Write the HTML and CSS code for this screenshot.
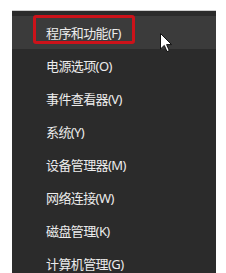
FILE: index.html
```html
<!DOCTYPE html>
<html lang="zh-CN">

<head>
    <meta charset="UTF-8">
    <meta name="viewport" content="width=device-width, initial-scale=1.0">
    <title>Win+X 菜单</title>
    <link rel="stylesheet" href="styles.css">
</head>

<body>
    <div class="menu">
        <ul class="menu-list">
            <li class="menu-item active">
                <span class="label">程序和功能(F)</span>
                <span class="mark"></span>
                <svg class="cursor" width="13" height="20" viewBox="0 0 13 20">
                    <path d="M0.5 0.5 L0.5 16 L4.3 12.4 L7 18.6 L9.3 17.6 L6.6 11.6 L11.6 11.6 Z" fill="#fff" stroke="#111" stroke-width="1" stroke-linejoin="round"/>
                </svg>
            </li>
            <li class="menu-item"><span class="label">电源选项(O)</span></li>
            <li class="menu-item"><span class="label">事件查看器(V)</span></li>
            <li class="menu-item"><span class="label">系统(Y)</span></li>
            <li class="menu-item"><span class="label">设备管理器(M)</span></li>
            <li class="menu-item"><span class="label">网络连接(W)</span></li>
            <li class="menu-item"><span class="label">磁盘管理(K)</span></li>
            <li class="menu-item"><span class="label">计算机管理(G)</span></li>
        </ul>
    </div>
</body>

</html>
```

FILE: styles.css
```css
:root {
    --menu-bg: #2b2b2b;
    --menu-hover: #3b3b3b;
    --menu-text: #ececec;
    --mark-red: #cc121a;
}

* {
    box-sizing: border-box;
    margin: 0;
    padding: 0;
}

html,
body {
    height: 100%;
    overflow: hidden;
}

body {
    background-color: #ffffff;
    font-family: "Noto Sans", "Noto Sans CJK SC", sans-serif;
    padding: 10px 10px 0 12px;
}

.menu {
    width: 204px;
    height: 100%;
    background-color: var(--menu-bg);
    border-top: 1px solid #cdcdcd;
    padding-top: 5px;
}

.menu-list {
    list-style: none;
}

.menu-item {
    position: relative;
    height: 33px;
    display: flex;
    align-items: center;
    padding-left: 34px;
    color: var(--menu-text);
    font-size: 13px;
}

.menu-item.active {
    background-color: var(--menu-hover);
}

.label {
    white-space: nowrap;
    letter-spacing: -0.6px;
}

/* red annotation box over the first entry */
.mark {
    position: absolute;
    left: 21px;
    top: -1px;
    width: 102px;
    height: 29px;
    border: 3px solid var(--mark-red);
    border-radius: 3px;
}

.cursor {
    position: absolute;
    left: 148px;
    top: 17px;
}
```
